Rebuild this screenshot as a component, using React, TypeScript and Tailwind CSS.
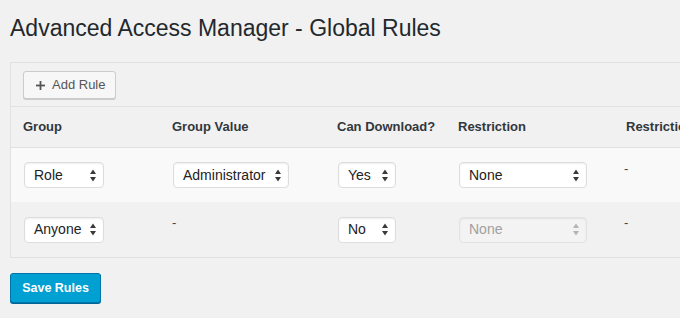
import React from "react";

function Arrows({ disabled }: { disabled?: boolean }) {
  const c = disabled ? "#b4b4b4" : "#3a3a3a";
  return (
    <svg width="6" height="13" viewBox="0 0 6 13" className="shrink-0">
      <polygon points="0,5 3,0.5 6,5" fill={c} />
      <polygon points="0,8 6,8 3,12.5" fill={c} />
    </svg>
  );
}

function Select({ label, w, disabled }: { label: string; w: string; disabled?: boolean }) {
  return (
    <div
      className={`${w} ml-[1px] flex h-[26px] items-center justify-between rounded-[4px] border pl-[9px] pr-[7px] text-[14px] shadow-[inset_0_1px_2px_rgba(0,0,0,0.07)] ${
        disabled ? "border-[#e2e2e2] bg-[#f3f3f3] text-[#a0a0a0]" : "border-[#dddddd] bg-white text-[#222]"
      }`}
    >
      <span>{label}</span>
      <Arrows disabled={disabled} />
    </div>
  );
}

function Dash() {
  return <div className="self-start pt-[11px] text-[13px] leading-[20px] text-[#444]">-</div>;
}

export default function App() {
  return (
    <div
      className="h-[318px] w-[680px] overflow-hidden bg-[#f1f1f1] pl-[10px]"
      style={{ fontFamily: '"Liberation Sans", Arial, sans-serif' }}
    >
      <h1 className="pt-[13px] text-[23px] leading-[30px] font-normal text-[#23282d]">
        Advanced Access Manager - Global Rules
      </h1>

      <div className="mt-[19px] w-[760px] border border-[#e1e1e1] bg-[#f1f1f1]">
        <div className="flex h-[44px] items-start border-b border-[#e1e1e1] pl-[12px] pt-[8px]">
          <div className="flex h-[28px] items-center rounded-[3px] border border-[#cccccc] bg-[#f7f7f7] pl-[12px] pr-[10px] text-[13px] text-[#555] shadow-[0_1px_0_#cccccc]">
            <svg width="9" height="9" viewBox="0 0 9 9" className="mr-[7px]">
              <rect x="3.6" y="0" width="1.8" height="9" fill="#555" />
              <rect x="0" y="3.6" width="9" height="1.8" fill="#555" />
            </svg>
            <span>Add Rule</span>
          </div>
        </div>

        <div className="flex h-[41px] items-center border-b border-[#e1e1e1] text-[13px] font-bold text-[#32373c]">
          <div className="w-[149px] pl-[12px]">Group</div>
          <div className="w-[165px] pl-[12px]">Group Value</div>
          <div className="w-[121px] pl-[12px]">Can Download?</div>
          <div className="w-[168px] pl-[12px]">Restriction</div>
          <div className="flex-1 pl-[12px]">Restriction Value</div>
        </div>

        <div className="flex h-[54px] items-center bg-[#f9f9f9]">
          <div className="w-[149px] pl-[12px]">
            <Select label="Role" w="w-[80px]" />
          </div>
          <div className="w-[165px] pl-[12px]">
            <Select label="Administrator" w="w-[116px]" />
          </div>
          <div className="w-[121px] pl-[12px]">
            <Select label="Yes" w="w-[58px]" />
          </div>
          <div className="w-[168px] pl-[12px]">
            <Select label="None" w="w-[128px]" />
          </div>
          <div className="flex flex-1 self-stretch pl-[10px]">
            <Dash />
          </div>
        </div>

        <div className="flex h-[55px] items-center bg-[#f1f1f1]">
          <div className="w-[149px] pl-[12px]">
            <Select label="Anyone" w="w-[80px]" />
          </div>
          <div className="flex w-[165px] self-stretch pl-[12px]">
            <Dash />
          </div>
          <div className="w-[121px] pl-[12px]">
            <Select label="No" w="w-[58px]" />
          </div>
          <div className="w-[168px] pl-[12px]">
            <Select label="None" w="w-[128px]" disabled />
          </div>
          <div className="flex flex-1 self-stretch pl-[10px]">
            <Dash />
          </div>
        </div>
      </div>

      <div className="mt-[15px] flex h-[30px] w-[91px] items-center justify-center rounded-[3px] border border-[#0073aa] bg-[#00a0d2] text-[12.5px] font-bold text-white shadow-[0_1px_0_#006799]">
        Save Rules
      </div>
    </div>
  );
}
